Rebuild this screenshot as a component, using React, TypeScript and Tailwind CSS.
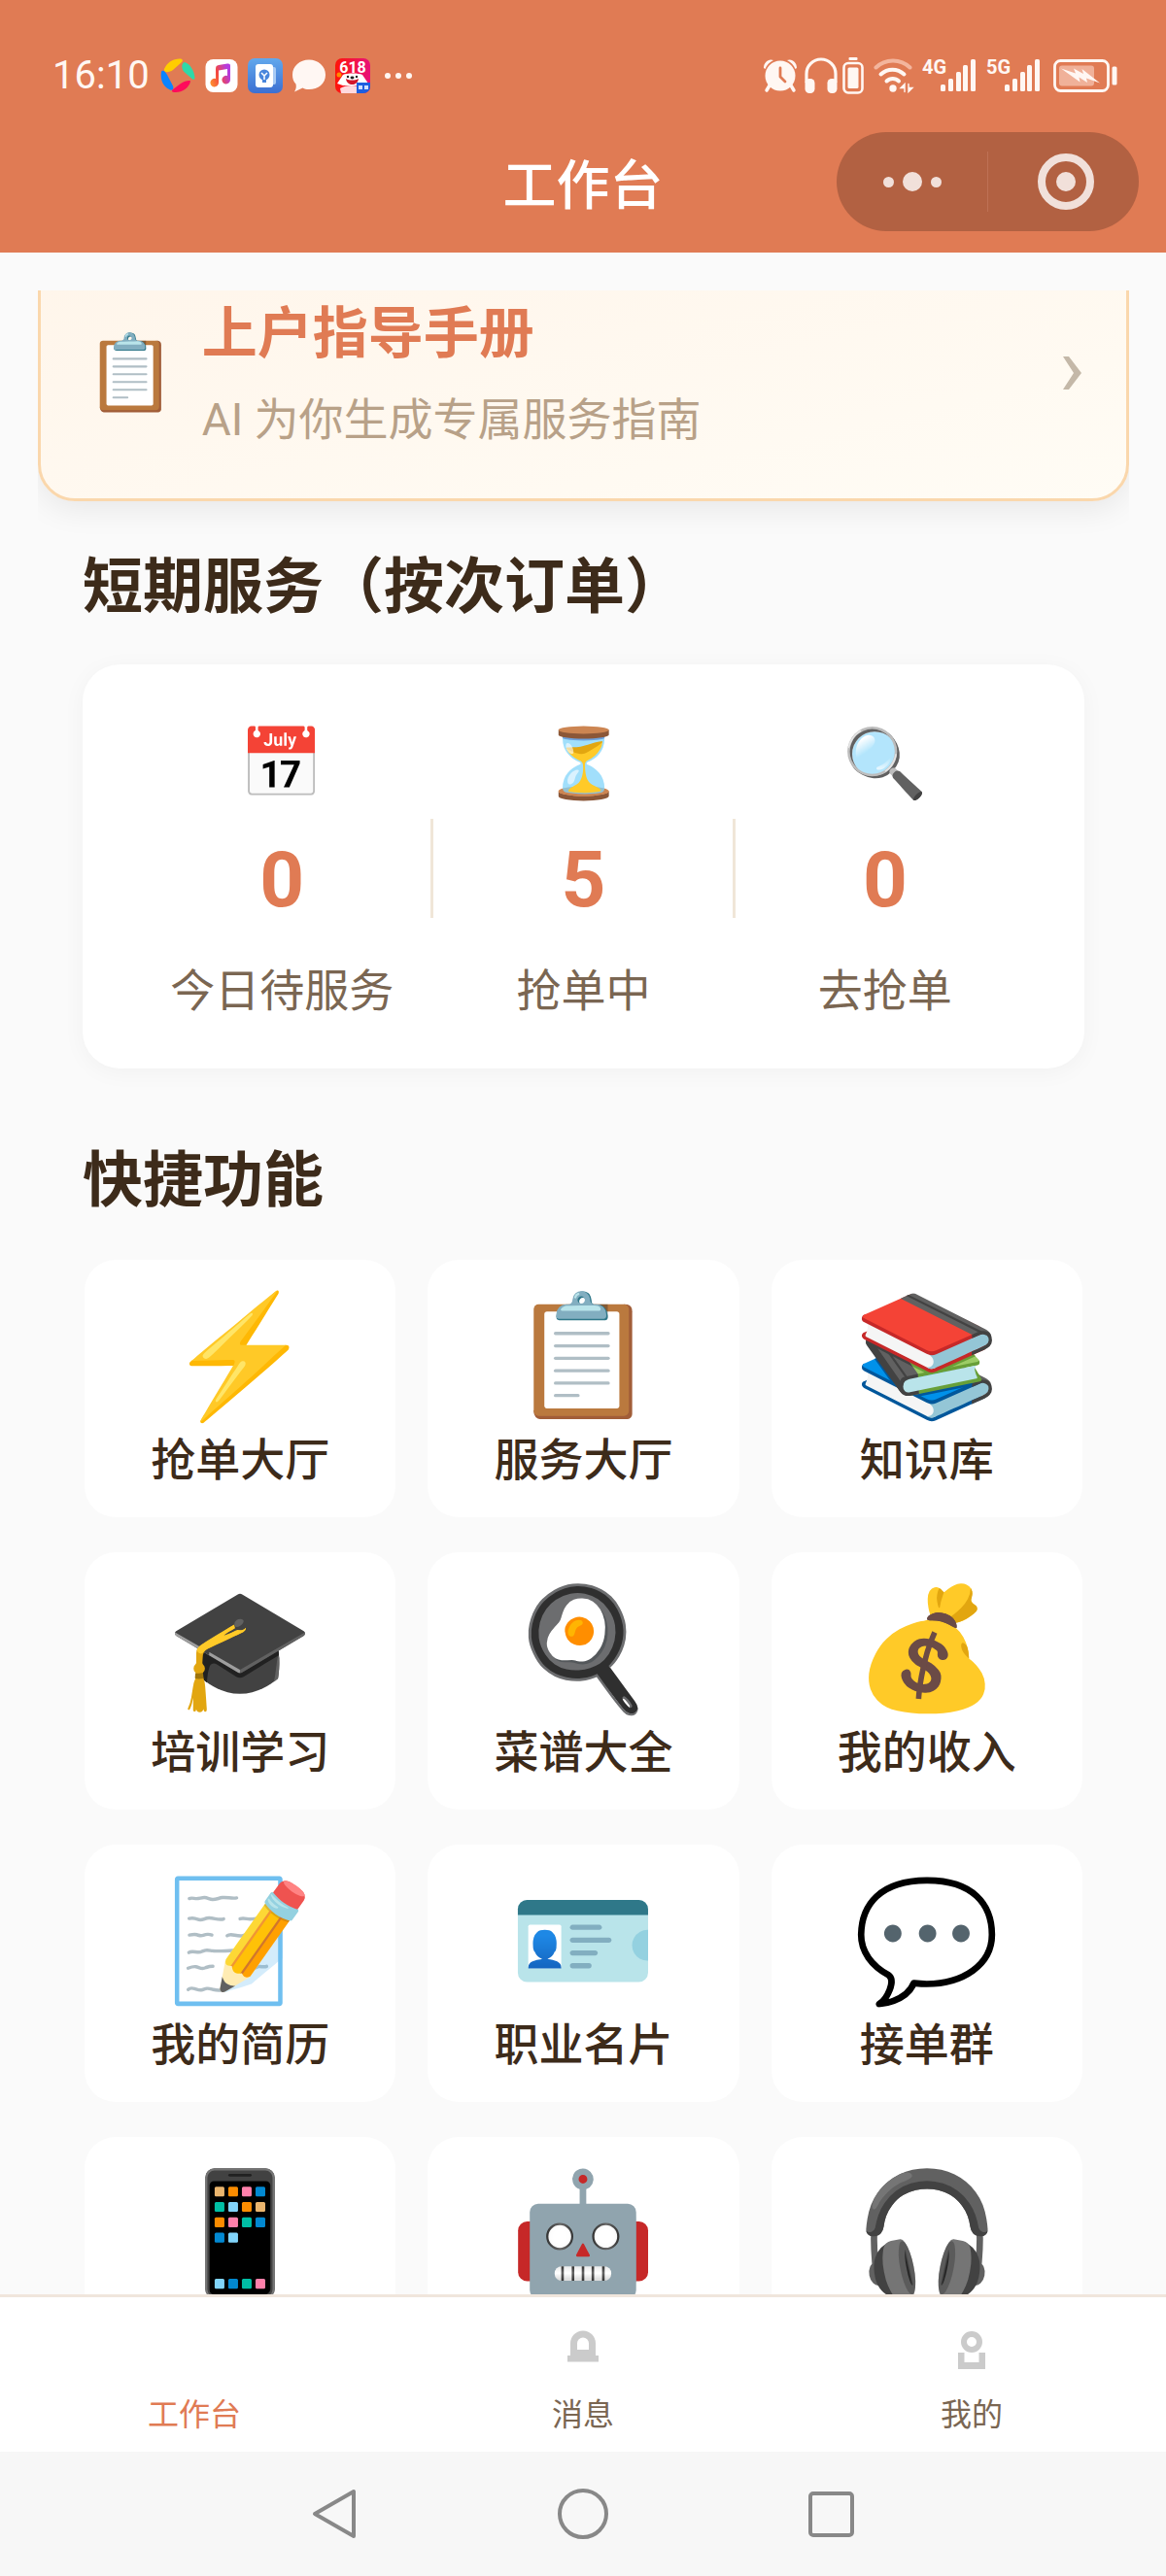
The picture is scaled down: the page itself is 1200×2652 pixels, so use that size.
import type { ReactNode } from "react";

type Stat = { icon: string; value: number; label: string };
type Tile = { icon: string; label?: string };

const stats: Stat[] = [
  { icon: "📅", value: 0, label: "今日待服务" },
  { icon: "⏳", value: 5, label: "抢单中" },
  { icon: "🔍", value: 0, label: "去抢单" },
];

const tiles: Tile[] = [
  { icon: "⚡", label: "抢单大厅" },
  { icon: "📋", label: "服务大厅" },
  { icon: "📚", label: "知识库" },
  { icon: "🎓", label: "培训学习" },
  { icon: "🍳", label: "菜谱大全" },
  { icon: "💰", label: "我的收入" },
  { icon: "📝", label: "我的简历" },
  { icon: "🪪", label: "职业名片" },
  { icon: "💬", label: "接单群" },
  { icon: "📱" },
  { icon: "🤖" },
  { icon: "🎧" },
];

function SwirlIcon() {
  return (
    <svg width="36" height="36" viewBox="0 0 36 36" aria-hidden="true">
      <path d="M4 11C7 4 14 0 21 .5c2 .5 2.500 2 1 3.500l-9 8c-4 3-10 3-9-1z" fill="#ffcd00" />
      <path d="M25 4c6 2 10 9 10.500 16 0 2-1.500 2.500-3 1l-8-7c-3-3-3-9 .5-10z" fill="#2fd9a8" />
      <path d="M1 14c-1.500 9 3 16 9 18.500 3 1 4-1 3-4L7 17c-1.500-3-5-6-6-3z" fill="#0a84ff" />
      <path d="M31 24c-2 7-9 11.500-16 11-3 0-4-1.500-2-3l8-6c4-3 10.500-4 10-2z" fill="#ff0a5b" />
    </svg>
  );
}

function MusicIcon() {
  return (
    <svg width="34" height="36" viewBox="0 0 34 36" aria-hidden="true">
      <defs>
        <linearGradient id="note" x1="0" y1="1" x2="1" y2="0.600">
          <stop offset="0" stopColor="#ff9a2e" />
          <stop offset="0.500" stopColor="#f4483f" />
          <stop offset="1" stopColor="#b53be0" />
        </linearGradient>
      </defs>
      <rect x="0.500" y="1" width="33" height="34" rx="8" fill="#fff" />
      <path
        d="M11 11c0-3 1-3.500 3-4l9-1.500c2-.3 3 .5 3 2V22a4.300 4.300 0 1 1-3-4v-7l-9 1.500V25a4.300 4.300 0 1 1-3-4z"
        fill="url(#note)"
      />
    </svg>
  );
}

function TipsIcon() {
  return (
    <svg width="36" height="36" viewBox="0 0 36 36" aria-hidden="true">
      <defs>
        <linearGradient id="tips" x1="0" y1="0" x2="0" y2="1">
          <stop offset="0" stopColor="#62a8ec" />
          <stop offset="1" stopColor="#3c6fd2" />
        </linearGradient>
      </defs>
      <rect width="36" height="36" rx="7" fill="url(#tips)" />
      <rect x="11" y="9" width="18" height="18" rx="2" fill="#a9cbf5" />
      <rect x="8" y="6" width="18" height="24" rx="3" fill="#fff" />
      <circle cx="17" cy="17" r="5.500" fill="#4a86dc" />
      <path d="M14 15l3 3 3-3M17 18v4" stroke="#fff" strokeWidth="1.500" fill="none" />
      <path d="M15 22h4v3h-4z" fill="#4a86dc" />
    </svg>
  );
}

function BubbleIcon() {
  return (
    <svg width="34" height="36" viewBox="0 0 34 36" aria-hidden="true">
      <path d="M17 1.500C26.500 1.500 34 8 34 17s-7.500 15-17 15c-3 0-4.500-.5-6.500-1.500L2 34.500c2-3 2-5.500 1.500-8C1 24 0 21 0 17 0 8 7.500 1.500 17 1.500z" fill="#fff7f3" />
    </svg>
  );
}

function SaleIcon() {
  return (
    <svg width="36" height="36" viewBox="0 0 36 36" aria-hidden="true">
      <defs>
        <clipPath id="sale">
          <rect width="36" height="36" rx="7" />
        </clipPath>
        <linearGradient id="saleBg" x1="0" y1="0" x2="1" y2="0">
          <stop offset="0" stopColor="#ff1508" />
          <stop offset="1" stopColor="#e8117a" />
        </linearGradient>
      </defs>
      <g clipPath="url(#sale)">
        <rect width="36" height="36" fill="url(#saleBg)" />
        <circle cx="4" cy="17" r="2.500" fill="#ff8a00" />
        <path d="M2 26l6-9c4-2 16-2 20 0l6 9-6 2H8z" fill="#fff" />
        <path d="M5 31c6-4 18-4 22 0l-1 5H6z" fill="#ffd9de" />
        <circle cx="13" cy="19" r="1.200" fill="#222" />
        <circle cx="22" cy="19" r="1.200" fill="#222" />
        <path d="M11 21c4 2 9 2 13 0-1 8-12 8-13 0z" fill="#d3152b" />
        <ellipse cx="17.500" cy="20" rx="2" ry="1.400" fill="#222" />
        <text x="18" y="15" textAnchor="middle" fontSize="16" fontWeight="700" fill="#fff" fontFamily="Roboto, sans-serif">
          618
        </text>
        <rect x="22" y="25" width="14" height="11" fill="#1d5fe0" />
        <path d="M24 28h4v4h-4zM30 28h4v4h-4z" fill="#cfe0ff" />
      </g>
    </svg>
  );
}

function AlarmIcon() {
  return (
    <svg width="34" height="36" viewBox="0 0 34 36" aria-hidden="true" fill="#fff7f3">
      <circle cx="17" cy="18" r="15.500" />
      <path d="M0 10C0 4 5 0 10 2 6 4 3 7 1.500 11zM34 10c0-6-5-10-10-8 4 2 7 5 8.500 9z" />
      <path d="M6 28l-3 5M28 28l3 5" stroke="#fff7f3" strokeWidth="3.500" strokeLinecap="round" />
      <path d="M17 10v9l5 5" stroke="#e07b54" strokeWidth="2.800" fill="none" strokeLinecap="round" strokeLinejoin="round" />
    </svg>
  );
}

function HeadphonesIcon() {
  return (
    <svg width="34" height="38" viewBox="0 0 34 38" aria-hidden="true" fill="none">
      <path d="M2 26V17a15 15 0 0 1 30 0v9" stroke="#fff7f3" strokeWidth="3.200" />
      <rect x="0.500" y="22" width="10" height="15" rx="4.500" fill="#fff7f3" />
      <rect x="23.500" y="22" width="10" height="15" rx="4.500" fill="#fff7f3" />
    </svg>
  );
}

function DeviceBatteryIcon() {
  return (
    <svg width="22" height="38" viewBox="0 0 22 38" aria-hidden="true" fill="none">
      <rect x="6.500" y="0" width="9" height="3" rx="1" fill="#fff7f3" />
      <rect x="1.500" y="6" width="19" height="30.500" rx="4.500" stroke="#fff7f3" strokeWidth="2.600" />
      <rect x="5.500" y="10.500" width="11" height="21.500" rx="1.500" fill="#fff7f3" />
    </svg>
  );
}

function WifiIcon() {
  return (
    <svg width="42" height="36" viewBox="0 0 42 36" aria-hidden="true" fill="none" strokeLinecap="round">
      <path d="M2.500 9.500C12 0 28 0 37.500 9.500" stroke="#f3b59d" strokeWidth="4" />
      <path d="M7.500 16.500c7-6.500 17-6.500 24 0" stroke="#fff7f3" strokeWidth="4" />
      <path d="M13.500 23.500c3.500-3.500 9-3.500 12.500 0" stroke="#fff7f3" strokeWidth="4" />
      <circle cx="20" cy="31" r="3.700" fill="#fff7f3" />
      <path d="M32 26.500v8M32 26.500l-4 4h4zM36 26.500v8M36 34.500l4-4h-4z" stroke="#fff7f3" strokeWidth="1.400" fill="#fff7f3" />
    </svg>
  );
}

function SignalIcon({ label }: { label: string }) {
  return (
    <svg width="56" height="50" viewBox="0 -8 56 50" role="img" aria-label={label} fill="#fff7f3">
      <text x="0" y="15" fontSize="20" fontWeight="700" fontFamily="Roboto, sans-serif">
        {label}
      </text>
      <rect x="19" y="26" width="5" height="7" rx="1.500" />
      <rect x="27" y="20" width="5" height="13" rx="1.500" />
      <rect x="35" y="13" width="5" height="20" rx="1.500" />
      <rect x="42" y="6" width="5" height="27" rx="1.500" />
      <rect x="50" y="0" width="5" height="33" rx="1.500" />
    </svg>
  );
}

function ChargingIcon() {
  return (
    <svg width="66" height="34" viewBox="0 0 66 34" aria-hidden="true" fill="none">
      <rect x="1.500" y="1.500" width="55" height="31" rx="6" stroke="#fff7f3" strokeWidth="2.800" />
      <rect x="6" y="6.500" width="36" height="21" rx="3" fill="#f0b199" />
      <path d="M8 9.500l15 5-2-5 10 5.500-1.500-5L48 24.500l-14-5 1 4.500-8.500-5.500 1 5z" fill="#fff7f3" />
      <rect x="60.500" y="7.500" width="5" height="19" rx="1.500" fill="#fff7f3" />
    </svg>
  );
}

function BellIcon() {
  return (
    <svg width="40" height="40" viewBox="0 0 40 40" aria-hidden="true" fill="#cbcbcb">
      <path fillRule="evenodd" d="M7 26V13.500a13 13 0 0 1 26 0V26h3v6.500H4V26zM14 20h12v-6.500a6 6 0 0 0-12 0z" />
    </svg>
  );
}

function PersonIcon() {
  return (
    <svg width="40" height="40" viewBox="0 0 40 40" aria-hidden="true">
      <circle cx="20" cy="12" r="8" fill="none" stroke="#cbcbcb" strokeWidth="6" />
      <path d="M6 23h6.500v10h15V23H34v17H6z" fill="#cbcbcb" />
    </svg>
  );
}

function StatusBar() {
  return (
    <div className="flex h-[136px] items-center justify-between pt-5 pr-[50px] pl-[54px]">
      <div className="flex items-center gap-[11px]">
        <span className="text-[40px] leading-[44px] text-[#fff7f3]">16:10</span>
        <span className="flex items-center gap-[10px]">
          <SwirlIcon />
          <MusicIcon />
          <TipsIcon />
          <BubbleIcon />
          <SaleIcon />
        </span>
        <span className="ml-1 flex gap-[5px]">
          <i className="size-[6px] rounded-full bg-[#fff7f3]" />
          <i className="size-[6px] rounded-full bg-[#fff7f3]" />
          <i className="size-[6px] rounded-full bg-[#fff7f3]" />
        </span>
      </div>
      <div className="flex items-center">
        <AlarmIcon />
        <span className="ml-2 flex gap-[5px]">
          <HeadphonesIcon />
          <DeviceBatteryIcon />
        </span>
        <span className="ml-[10px] flex items-center gap-[8px]">
          <WifiIcon />
          <SignalIcon label="4G" />
        </span>
        <span className="ml-[10px] flex items-center gap-[13px]">
          <SignalIcon label="5G" />
          <ChargingIcon />
        </span>
      </div>
    </div>
  );
}

function Header() {
  return (
    <header className="shrink-0 bg-[#e07b54] pb-[22px]">
      <StatusBar />
      <div className="grid grid-cols-[1fr_auto_1fr] items-center px-7">
        <h1 className="col-start-2 pt-2 text-[55px] leading-[70px] font-medium text-white">工作台</h1>
        <div className="grid h-[102px] w-[311px] grid-cols-[1fr_1px_1fr] items-center justify-self-end rounded-full bg-[#b26142]">
          <button type="button" aria-label="更多" className="flex h-full items-center justify-center gap-[9px]">
            <i className="size-[11px] rounded-full bg-[#f1e0da]" />
            <i className="size-5 rounded-full bg-[#f1e0da]" />
            <i className="size-[11px] rounded-full bg-[#f1e0da]" />
          </button>
          <span className="h-[62px] bg-[#be7155]" />
          <button type="button" aria-label="关闭" className="flex h-full items-center justify-center pl-1">
            <span className="flex size-[58px] items-center justify-center rounded-full border-[8px] border-[#f1e0da]">
              <i className="size-5 rounded-full bg-[#f1e0da]" />
            </span>
          </button>
        </div>
      </div>
    </header>
  );
}

function GuideCard() {
  return (
    <a
      href="#guide"
      className="-mt-[47px] flex items-center gap-[26px] rounded-[38px] border-[3px] border-[#fad7ac] bg-linear-to-br from-[#fff5ea] to-[#fffcf5] px-[45px] py-[53px] shadow-[0_8px_32px_rgba(0,0,0,0.08)]"
    >
      <span className="text-[76px] leading-[92px]">📋</span>
      <span className="flex flex-1 flex-col gap-7 pt-1">
        <span className="text-[57px] leading-[64px] font-bold text-[#e07b54]">上户指导手册</span>
        <span className="text-[46px] leading-[56px] text-[#b8a188]">AI 为你生成专属服务指南</span>
      </span>
      <svg width="22" height="36" viewBox="0 0 22 36" aria-hidden="true">
        <path d="M2 1h6l13 17L8 35H2l11-17z" fill="#c4b8a8" />
      </svg>
    </a>
  );
}

function SectionTitle({ children }: { children: ReactNode }) {
  return <h2 className="text-[62px] leading-[80px] font-bold text-[#3d2b1a]">{children}</h2>;
}

function StatsCard() {
  return (
    <div className="mt-[39px] grid grid-cols-3 rounded-[38px] bg-white px-[50px] pt-[52px] pb-[48px] shadow-[0_4px_24px_rgba(0,0,0,0.04)]">
      {stats.map((stat, index) => (
        <button key={stat.label} type="button" className="relative flex flex-col items-center">
          <span className="text-[70px] leading-[100px]">{stat.icon}</span>
          <span className="mt-5 text-[80px] leading-[100px] font-bold text-[#e07b54]">{stat.value}</span>
          <span className="mt-8 text-[46px] leading-[64px] text-[#7a6652]">{stat.label}</span>
          {index < stats.length - 1 && (
            <i className="absolute top-1/2 -right-px h-[102px] w-[3px] -translate-y-1/2 bg-[#f0e6d8]" />
          )}
        </button>
      ))}
    </div>
  );
}

function TileGrid() {
  return (
    <div className="mt-[41px] grid grid-cols-3 gap-x-[33px] gap-y-9 px-[2px]">
      {tiles.map((tile) => (
        <button key={tile.icon} type="button" className="flex flex-col items-center rounded-[32px] bg-white pt-8 pb-[29px]">
          <span className="text-[122px] leading-[136px]">{tile.icon}</span>
          {tile.label && <span className="mt-2 text-[46px] leading-[60px] font-medium text-[#3d2b1a]">{tile.label}</span>}
        </button>
      ))}
    </div>
  );
}

function TabItem({ label, active, children }: { label: string; active?: boolean; children?: ReactNode }) {
  return (
    <a
      href="#tab"
      aria-current={active ? "page" : undefined}
      className={`flex flex-col items-center gap-[19px] pt-7 pb-4 ${active ? "text-[#e07b54]" : "text-[#7a6652]"}`}
    >
      <span className="flex h-[52px] items-center">{children}</span>
      <span className="text-[32px] leading-[44px]">{label}</span>
    </a>
  );
}

function SystemNav() {
  return (
    <div className="flex h-32 shrink-0 items-center justify-center gap-[200px] bg-[#f7f7f7]">
      <button type="button" aria-label="返回">
        <svg width="56" height="56" viewBox="0 0 56 56" fill="none" stroke="#888" strokeWidth="4" strokeLinejoin="round">
          <path d="M48 5v46L8 28z" />
        </svg>
      </button>
      <button type="button" aria-label="主页">
        <svg width="56" height="56" viewBox="0 0 56 56" fill="none" stroke="#888" strokeWidth="4">
          <circle cx="28" cy="28" r="24" />
        </svg>
      </button>
      <button type="button" aria-label="最近任务">
        <svg width="56" height="56" viewBox="0 0 56 56" fill="none" stroke="#888" strokeWidth="4">
          <rect x="6" y="7" width="43" height="43" rx="3" />
        </svg>
      </button>
    </div>
  );
}

export default function App() {
  return (
    <div className="flex h-screen flex-col bg-[#fafafa] font-['Roboto','Noto_Sans_CJK_SC','Noto_Color_Emoji',sans-serif]">
      <Header />
      <main className="mt-[39px] mr-[38px] ml-[39px] flex-1 overflow-y-auto [scrollbar-width:none]">
        <GuideCard />
        <section className="px-[46px] pt-[49px]">
          <SectionTitle>短期服务（按次订单）</SectionTitle>
          <StatsCard />
        </section>
        <section className="px-[46px] pt-[76px]">
          <SectionTitle>快捷功能</SectionTitle>
          <TileGrid />
        </section>
      </main>
      <nav className="grid shrink-0 grid-cols-3 border-t-[3px] border-[#f0e6dc] bg-white">
        <TabItem label="工作台" active />
        <TabItem label="消息">
          <BellIcon />
        </TabItem>
        <TabItem label="我的">
          <PersonIcon />
        </TabItem>
      </nav>
      <SystemNav />
    </div>
  );
}
